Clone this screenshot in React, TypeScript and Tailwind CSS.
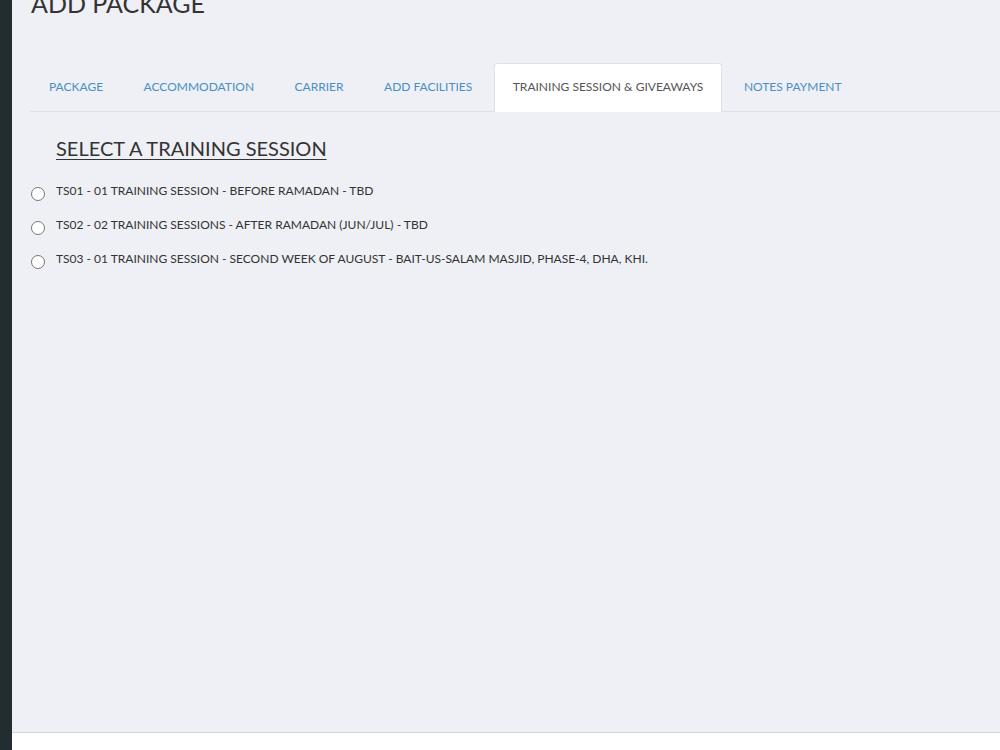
const tabs = [
  'PACKAGE',
  'ACCOMMODATION',
  'CARRIER',
  'ADD FACILITIES',
  'TRAINING SESSION & GIVEAWAYS',
  'NOTES PAYMENT',
]

const sessions = [
  'TS01 - 01 TRAINING SESSION - BEFORE RAMADAN - TBD',
  'TS02 - 02 TRAINING SESSIONS - AFTER RAMADAN (JUN/JUL) - TBD',
  'TS03 - 01 TRAINING SESSION - SECOND WEEK OF AUGUST - BAIT-US-SALAM MASJID, PHASE-4, DHA, KHI.',
]

export default function App() {
  const active = 4
  return (
    <div className="flex h-[750px] w-[1000px] overflow-hidden bg-white font-['Lato',sans-serif]">
      {/* sidebar edge */}
      <div className="w-[12px] shrink-0 bg-[#222d32]" />

      <div className="flex flex-1 flex-col">
        <div className="h-[733px] border-b border-[#d2d6de] bg-[#eef0f5]">
          <h1 className="-mt-[10px] ml-[19px] text-[25px] leading-[26px] text-[#333]">ADD PACKAGE</h1>

          {/* tabs */}
          <div className="ml-[18px] mt-[47px] flex border-b border-[#dde1e8]">
            {tabs.map((t, i) => (
              <div
                key={t}
                className={
                  i === active
                    ? '-mb-px mr-[2.5px] rounded-t-[3px] border border-b-0 border-[#dde1e8] bg-white px-[18px] py-[15px] text-[12px] leading-[16px] text-[#555]'
                    : 'mr-[2.5px] border border-transparent px-[18px] py-[15px] text-[12px] leading-[16px] text-[#4a8fc4]'
                }
              >
                {t}
              </div>
            ))}
          </div>

          <div className="ml-[19px] pt-[24px]">
            <h3 className="ml-[25px] text-[20px] leading-[24px] text-[#333] underline underline-offset-[3px] decoration-1">
              SELECT A TRAINING SESSION
            </h3>
            <div className="mt-[22px] flex flex-col gap-[15px]">
              {sessions.map((s) => (
                <label key={s} className="flex items-start gap-[11px] text-[12px] leading-[17px] text-[#333]">
                  <span className="mt-[5px] h-[14px] w-[14px] shrink-0 rounded-full border border-[#767676] bg-white" />
                  <span>{s}</span>
                </label>
              ))}
            </div>
          </div>
        </div>
        <div className="flex-1 bg-white" />
      </div>
    </div>
  )
}
